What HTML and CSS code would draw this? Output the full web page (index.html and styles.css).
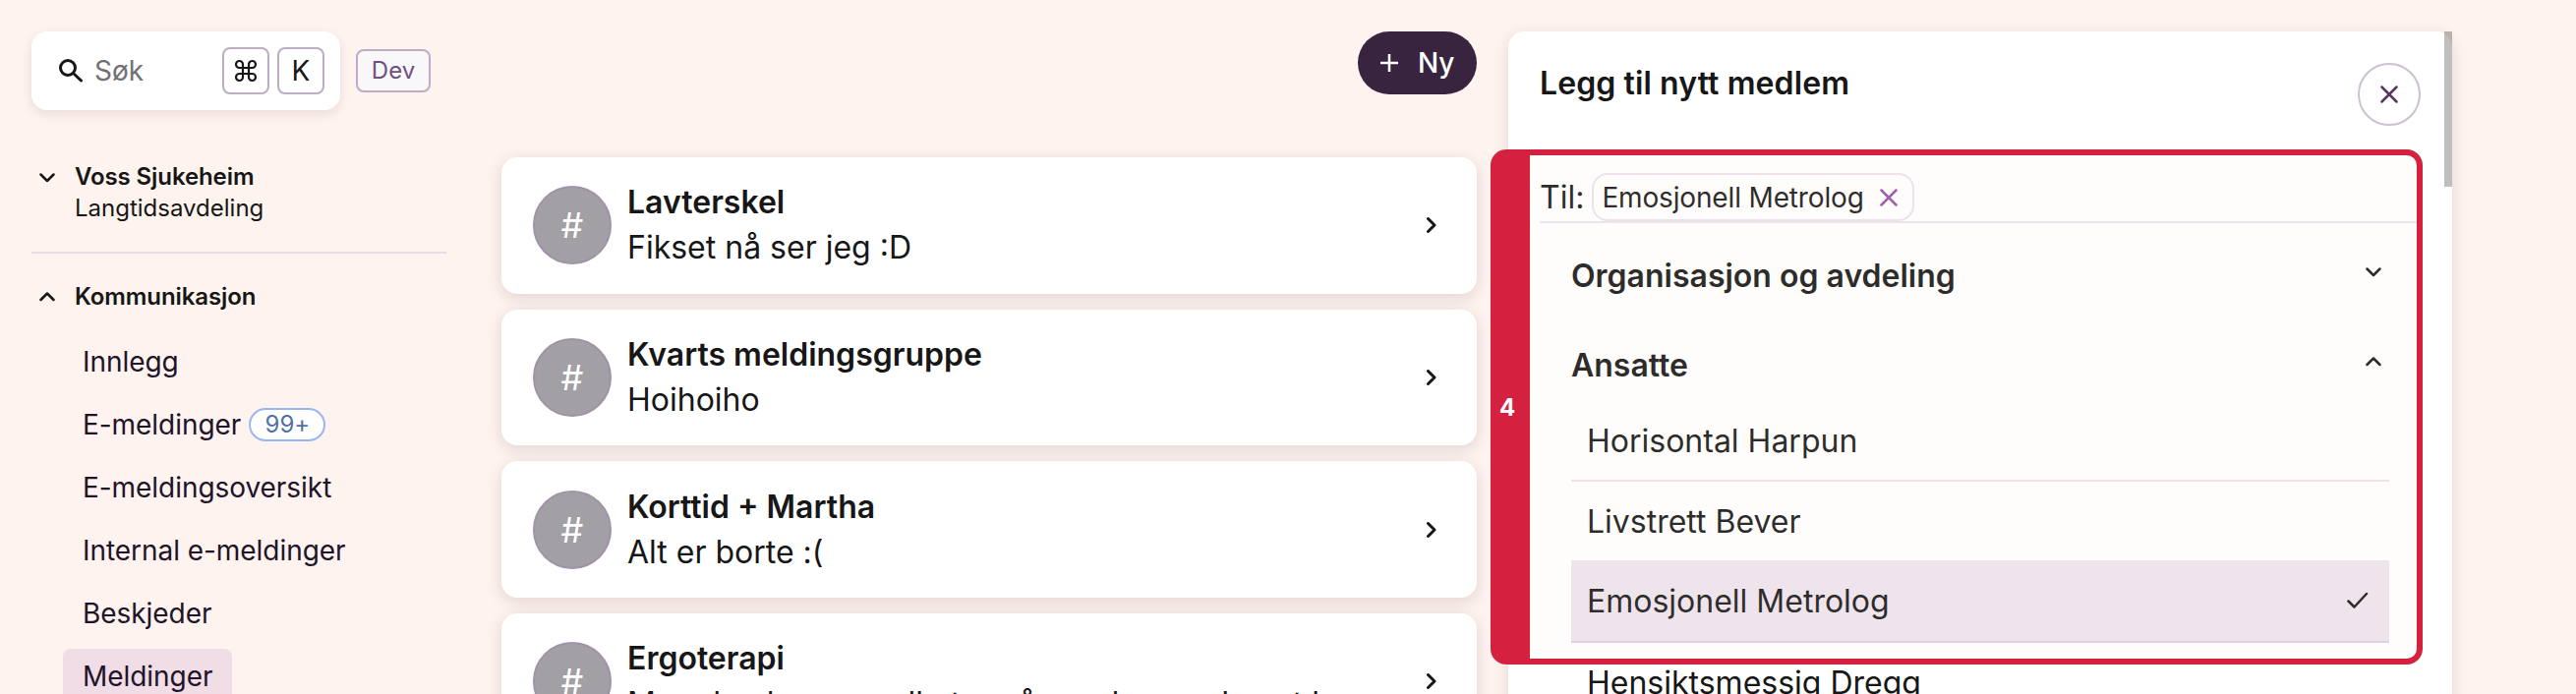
FILE: index.html
```html
<!DOCTYPE html>
<html lang="nb">
<head>
    <meta charset="UTF-8">
    <meta name="viewport" content="width=device-width, initial-scale=1.0">
    <title>Meldinger</title>
    <link rel="stylesheet" href="styles.css">
</head>
<body>
    <aside class="sidebar">
        <div class="topbar">
            <div class="search">
                <svg class="search-icon" viewBox="0 0 24 24"><circle cx="9" cy="9" r="7.5"/><path d="M14.5 14.5L22.5 22"/></svg>
                <span class="search-label">Søk</span>
                <kbd>
                    <svg class="cmd-icon" viewBox="0 0 24 24"><path d="M9 9V5.5A3.5 3.5 0 1 0 5.5 9H18.500A3.500 3.500 0 1 0 15 5.500V18.500A3.500 3.500 0 1 0 18.500 15H5.500A3.500 3.500 0 1 0 9 18.500Z"/></svg>
                </kbd>
                <kbd>K</kbd>
            </div>
            <span class="dev-tag">Dev</span>
        </div>

        <div class="unit">
            <svg class="chevron" viewBox="0 0 16 10"><path d="M1.500 1.500L8 8L14.500 1.500"/></svg>
            <div>
                <div class="heading">Voss Sjukeheim</div>
                <div class="unit-sub">Langtidsavdeling</div>
            </div>
        </div>

        <div class="section-title">
            <svg class="chevron" viewBox="0 0 16 10"><path d="M1.500 8L8 1.500L14.500 8"/></svg>
            <div class="heading">Kommunikasjon</div>
        </div>
        <nav>
            <a class="nav-item">Innlegg</a>
            <a class="nav-item">E-meldinger <span class="count">99+</span></a>
            <a class="nav-item">E-meldingsoversikt</a>
            <a class="nav-item">Internal e-meldinger</a>
            <a class="nav-item">Beskjeder</a>
            <a class="nav-item active">Meldinger</a>
        </nav>
    </aside>

    <main class="messages">
        <button class="new-btn">
            <svg class="plus" viewBox="0 0 18 18"><path d="M9 0V18M0 9H18"/></svg>
            Ny
        </button>
        <div class="card">
            <div class="avatar">#</div>
            <div class="card-text">
                <div class="card-title">Lavterskel</div>
                <div>Fikset nå ser jeg :D</div>
            </div>
            <svg class="arrow" viewBox="0 0 10 16"><path d="M1.500 1.500L8 8L1.500 14.500"/></svg>
        </div>
        <div class="card">
            <div class="avatar">#</div>
            <div class="card-text">
                <div class="card-title">Kvarts meldingsgruppe</div>
                <div>Hoihoiho</div>
            </div>
            <svg class="arrow" viewBox="0 0 10 16"><path d="M1.500 1.500L8 8L1.500 14.500"/></svg>
        </div>
        <div class="card">
            <div class="avatar">#</div>
            <div class="card-text">
                <div class="card-title">Korttid + Martha</div>
                <div>Alt er borte :(</div>
            </div>
            <svg class="arrow" viewBox="0 0 10 16"><path d="M1.500 1.500L8 8L1.500 14.500"/></svg>
        </div>
        <div class="card">
            <div class="avatar">#</div>
            <div class="card-text">
                <div class="card-title">Ergoterapi</div>
                <div>Men den hos oss alle tre på vonde veg den at bra</div>
            </div>
            <svg class="arrow" viewBox="0 0 10 16"><path d="M1.500 1.500L8 8L1.500 14.500"/></svg>
        </div>
    </main>

    <section class="panel">
        <div class="panel-head">
            <h1>Legg til nytt medlem</h1>
            <button class="close-btn">
                <svg viewBox="0 0 18 18"><path d="M1.500 1.500L16.500 16.500M16.500 1.500L1.500 16.500"/></svg>
            </button>
        </div>

        <div class="recipients">
            <span class="to-label">Til:</span>
            <span class="chip">
                Emosjonell Metrolog
                <svg viewBox="0 0 18 18"><path d="M1.500 1.500L16.500 16.500M16.500 1.500L1.500 16.500"/></svg>
            </span>
        </div>

        <div class="groups">
            <div class="group-title">
                Organisasjon og avdeling
                <svg class="chevron" viewBox="0 0 16 10"><path d="M1.500 1.500L8 8L14.500 1.500"/></svg>
            </div>
            <div class="group-title open">
                Ansatte
                <svg class="chevron" viewBox="0 0 16 10"><path d="M1.500 8L8 1.500L14.500 8"/></svg>
            </div>
            <div class="person">Horisontal Harpun</div>
            <div class="person">Livstrett Bever</div>
            <div class="person selected">
                Emosjonell Metrolog
                <svg class="check" viewBox="0 0 22 18"><path d="M1.500 9.500L7.500 15.500L20 2"/></svg>
            </div>
            <div class="person">Hensiktsmessig Dregg</div>
        </div>

        <div class="scrollbar"></div>
        <!-- numbered highlight on top of the panel -->
        <div class="callout">4</div>
    </section>
</body>
</html>
```
FILE: styles.css
```css
* { box-sizing: border-box; }
body {
    margin: 0;
    height: 706px;
    overflow: hidden;
    display: flex;
    align-items: flex-start;
    padding: 32px 126px 0 32px;
    background: #fef3ee;
    color: #171717;
    font-family: Inter, "Liberation Sans", sans-serif;
    font-size: 28px;
}
svg { display: block; flex: none; fill: none; stroke: currentColor; stroke-width: 2.5; stroke-linecap: round; stroke-linejoin: round; }
button { font-family: inherit; cursor: pointer; }

/* Sidebar */
.sidebar { width: 422px; margin-right: 56px; flex: none; }
.topbar { display: flex; align-items: center; gap: 16px; }
.search {
    display: flex;
    align-items: center;
    width: 314px;
    height: 80px;
    padding: 0 16px 0 28px;
    background: #fff;
    border-radius: 16px;
    box-shadow: 0 4px 12px rgba(60, 20, 40, 0.1);
}
.search-icon { width: 24px; height: 24px; stroke-width: 3; }
.search-label { flex: 1; margin-left: 12px; color: #737076; }
kbd {
    display: flex;
    align-items: center;
    justify-content: center;
    width: 48px;
    height: 48px;
    margin-left: 8px;
    border: 2px solid #beacc4;
    border-radius: 8px;
    font: inherit;
}
.cmd-icon { width: 24px; height: 24px; stroke-width: 2.2; }
.dev-tag {
    width: 76px;
    height: 44px;
    line-height: 40px;
    text-align: center;
    font-size: 24px;
    color: #70517e;
    background: #f8f8fb;
    border: 2px solid #beacc4;
    border-radius: 8px;
}
.unit {
    display: flex;
    gap: 20px;
    margin-top: 52px;
    padding: 0 0 28px 8px;
    border-bottom: 2px solid #ecdbe6;
    font-size: 24px;
    line-height: 32px;
}
.chevron { width: 16px; height: 10px; }
.unit .chevron { margin-top: 12px; }
.heading { font-weight: 600; font-size: 24px; line-height: 32px; letter-spacing: -0.1px; }
.section-title { display: flex; align-items: center; gap: 20px; padding: 28px 0 22px 8px; }
.nav-item {
    display: flex;
    align-items: center;
    width: fit-content;
    height: 56px;
    margin: 0 0 8px 32px;
    padding: 0 20px;
    border-radius: 8px;
    color: #20142a;
    letter-spacing: -0.05px;
}
.nav-item.active { background: #f0dde6; }
.count {
    width: 78px;
    height: 34px;
    margin-left: 8px;
    line-height: 30px;
    text-align: center;
    font-size: 24px;
    color: #5271a5;
    background: #fff;
    border: 2px solid #98b6f1;
    border-radius: 17px;
}

/* Message list */
.messages { width: 992px; margin-right: 32px; flex: none; display: flex; flex-direction: column; font-size: 32px; }
.new-btn {
    display: flex;
    align-items: center;
    gap: 20px;
    align-self: flex-end;
    width: 121px;
    height: 64px;
    margin-bottom: 64px;
    padding: 0 0 0 23px;
    border: 0;
    border-radius: 32px;
    background: #39243f;
    color: #fff;
    font-size: 28px;
    font-weight: 500;
}
.plus { width: 18px; height: 18px; stroke-linecap: butt; }
.card {
    display: flex;
    align-items: center;
    flex: none;
    height: 138.67px;
    margin-bottom: 16px;
    padding: 0 41px 0 32px;
    background: #fff;
    border-radius: 16px;
    box-shadow: 0 4px 16px rgba(60, 20, 40, 0.14);
}
.avatar {
    width: 80px;
    height: 80px;
    line-height: 76px;
    text-align: center;
    font-size: 36px;
    color: #fff;
    background: #a3a0a5;
    border: 2px solid #a192a7;
    border-radius: 50%;
}
.card-text { flex: 1; margin-left: 16px; line-height: 46px; white-space: nowrap; }
.card-title { font-weight: 600; }
.arrow { width: 10px; height: 16px; stroke-width: 3; }

/* Panel */
.panel {
    position: relative;
    width: 960px;
    height: 720px;
    padding: 32px;
    background: #fff;
    border-radius: 16px;
    box-shadow: 0 4px 16px rgba(60, 20, 40, 0.12);
    font-size: 32px;
}
.panel-head { display: flex; justify-content: space-between; height: 112px; }
h1 { margin: 0; font-size: 32px; font-weight: 600; line-height: 42px; letter-spacing: 0.1px; }
.close-btn {
    display: flex;
    align-items: center;
    justify-content: center;
    width: 64px;
    height: 64px;
    padding: 0;
    background: #fff;
    border: 2px solid #ccc0d2;
    border-radius: 50%;
    color: #59355f;
}
.close-btn svg, .chip svg { width: 18px; height: 18px; }
.recipients { display: flex; align-items: center; gap: 8px; height: 51px; border-bottom: 2px solid #ede2ee; }
.chip {
    display: flex;
    align-items: center;
    gap: 16px;
    width: 328px;
    height: 49px;
    padding-left: 8px;
    border: 2px solid #ede0ee;
    border-radius: 16px;
    font-size: 28px;
    letter-spacing: -0.15px;
    white-space: nowrap;
}
.chip svg { color: #9352a0; }
.groups { padding: 8px 32px 0; }
.group-title { display: flex; justify-content: space-between; height: 91px; padding: 26px 8px 0 0; line-height: 40px; font-weight: 600; }
.group-title.open { height: 82px; }
.group-title .chevron { margin-top: 11px; }
.person {
    display: flex;
    align-items: center;
    justify-content: space-between;
    height: 82px;
    padding: 0 21px 0 16px;
    border-bottom: 2px solid #ede0ee;
}
.person.selected { height: 84px; margin-top: -2px; background: #efe2ee; border-color: #e0cbe3; }
.check { width: 22px; height: 18px; }
.scrollbar { position: absolute; top: 0; right: 0; width: 8px; height: 158px; background: rgba(0, 0, 0, 0.25); }
.callout {
    position: absolute;
    top: 120px;
    left: -18px;
    width: 948px;
    height: 524px;
    border: 6px solid #d4213f;
    border-left-width: 40px;
    border-radius: 16px;
    background: rgba(248, 238, 225, 0.1);
    color: #fff;
    font-size: 24px;
    font-weight: 700;
    line-height: 513px;
    text-indent: -31px;
}
```
